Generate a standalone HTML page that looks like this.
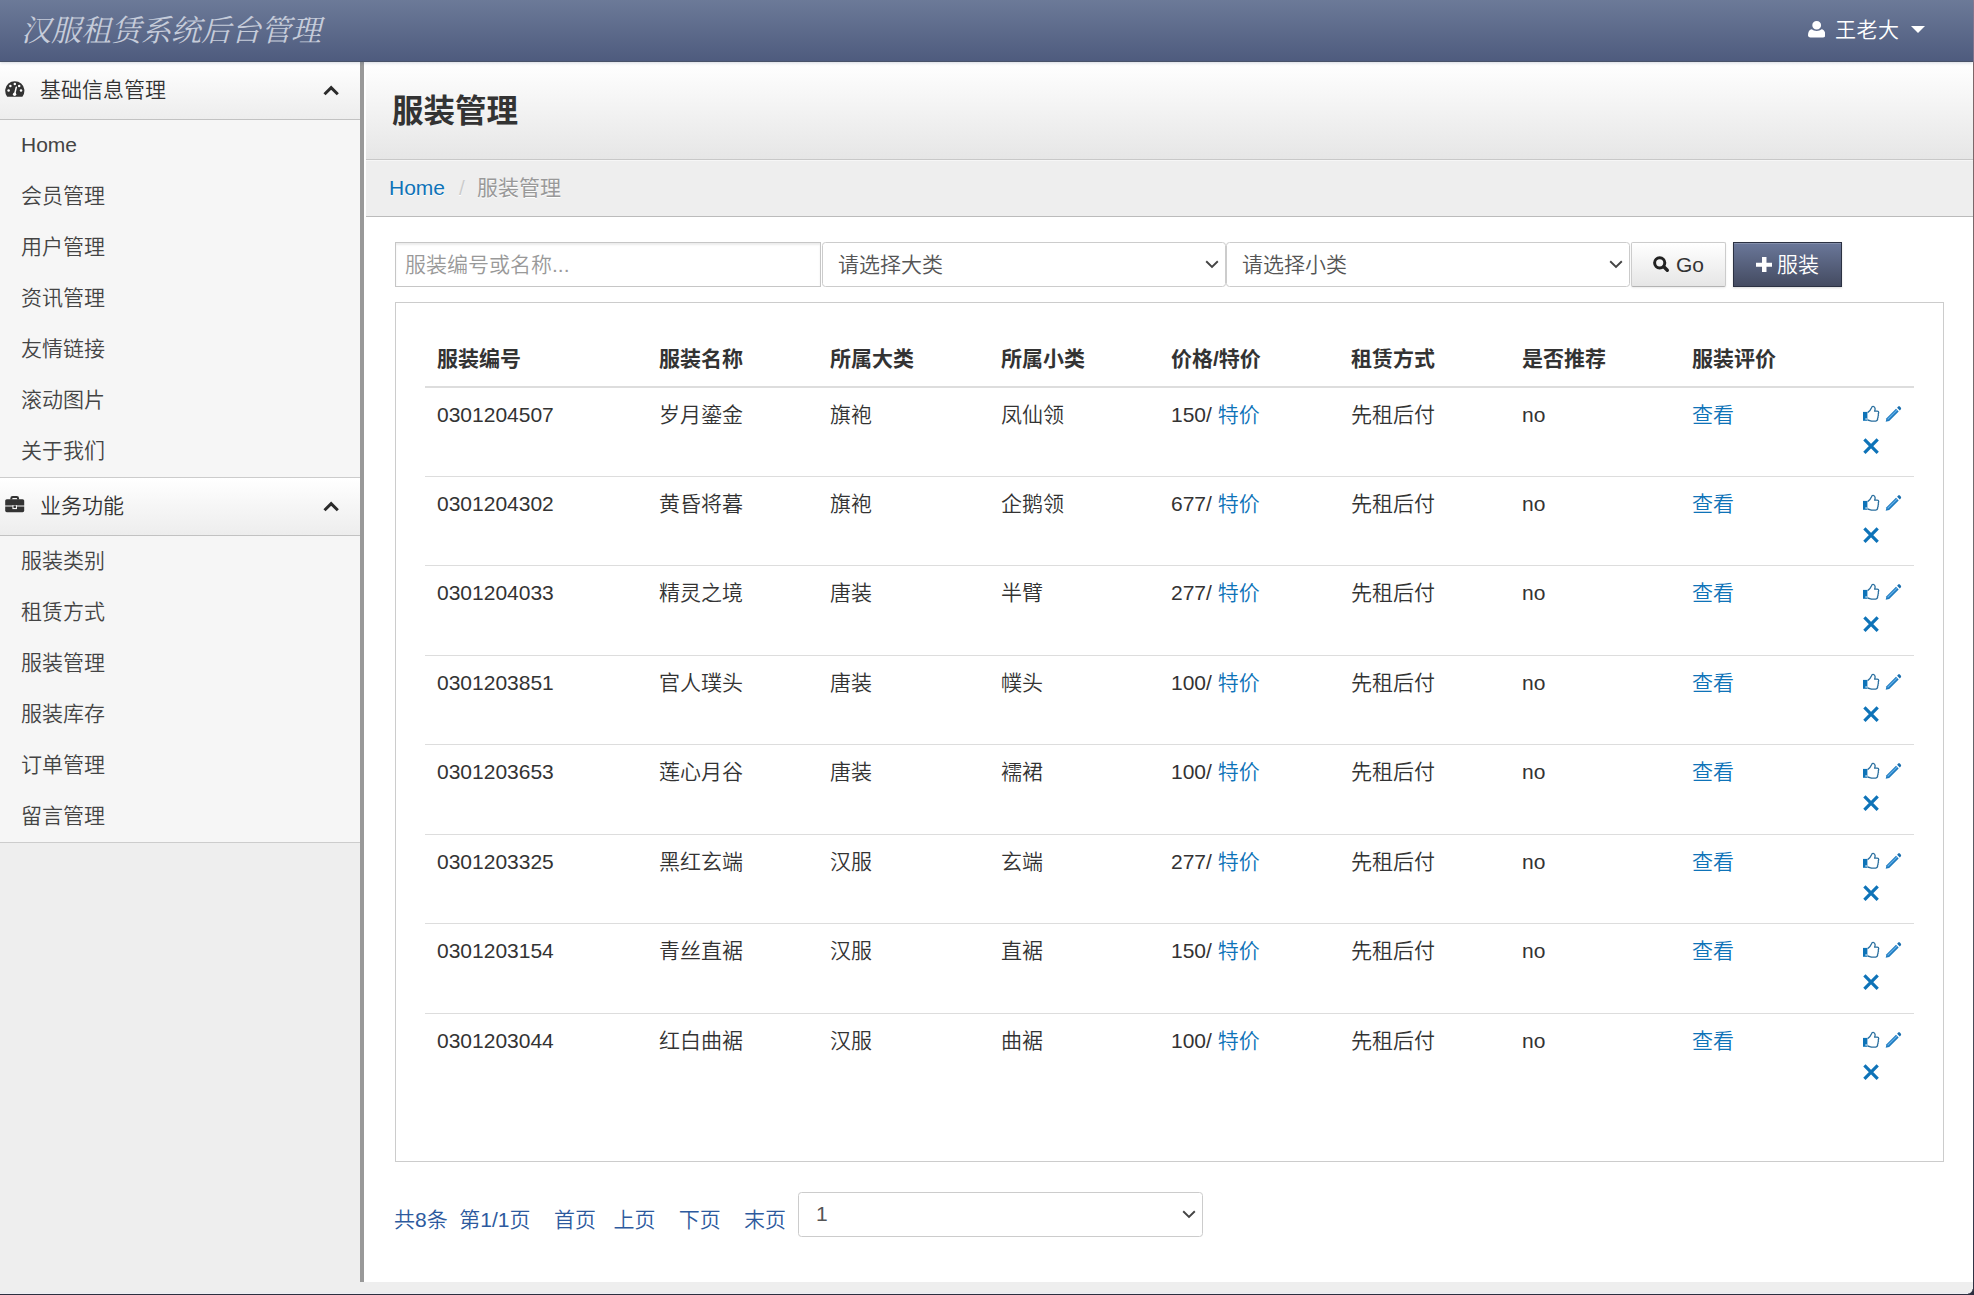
<!DOCTYPE html>
<html lang="zh-CN">
<head>
<meta charset="utf-8">
<title>汉服租赁系统后台管理</title>
<style>
*{box-sizing:border-box;margin:0;padding:0}
html,body{width:1974px;height:1295px;overflow:hidden;background:#fff}
body{position:relative;font-family:"Liberation Sans","Noto Sans CJK SC",sans-serif;font-size:21px;line-height:30px;color:#333;font-weight:350}
a{color:#0e73b8;text-decoration:none}
svg{display:block}

/* top bar */
#top{position:absolute;left:0;top:0;width:1973px;height:62px;background:linear-gradient(#6c7a98,#4e5b7e);border-bottom:1px solid #495369;box-shadow:0 1px 3px rgba(30,50,90,.18);z-index:5}
#brand{position:absolute;left:21px;top:9px;height:44px;line-height:44px;font-family:"Liberation Serif","Noto Serif CJK SC",serif;font-style:italic;font-weight:400;font-size:30px;color:#c6ccda;white-space:nowrap}
#user{position:absolute;left:1835px;top:15px;letter-spacing:.5px;line-height:30px;font-size:21px;color:#fff;white-space:nowrap}
#user-ico{position:absolute;left:1808px;top:21px}
#user-caret{position:absolute;left:1911px;top:26px;width:0;height:0;border-left:7px solid transparent;border-right:7px solid transparent;border-top:7px solid #fff}

/* sidebar */
#side{position:absolute;left:0;top:62px;width:360px;height:1220px;background:#eee}
#divider{position:absolute;left:360px;top:62px;width:4px;height:1220px;background:#999}
.sec{position:absolute;left:0;width:360px;height:58px;background:linear-gradient(#fff,#ededed);border-bottom:1px solid #c2c2c2}
.sec span{position:absolute;left:40px;top:13px;line-height:30px;font-size:21px;color:#333}
.sec .ico{position:absolute;left:5px;top:18px}
.sec .chev{position:absolute;left:322px;top:22px}
.menu{position:absolute;left:0;width:360px;background:#f6f6f6;border-bottom:1px solid #ccc;list-style:none}
.menu li{height:51px;line-height:49px;padding-left:21px;font-size:21px;color:#444}

/* content */
#main{position:absolute;left:364px;top:62px;width:1609px;height:1220px;background:#fff}
#phead{position:absolute;left:2px;top:0;width:1607px;height:98px;background:linear-gradient(#fff,#e6e6e6);border-bottom:1px solid #c8c8c8}
#phead h1{position:absolute;left:26px;top:27px;font-size:31.5px;line-height:45px;font-weight:bold;color:#333}
#crumb{position:absolute;left:2px;top:98px;width:1607px;height:57px;text-shadow:0 1px 0 #fff;box-shadow:inset 0 1px 0 #f6f6f6;background:#eee;border-bottom:1px solid #bbb;font-size:21px;line-height:30px}
#crumb a{position:absolute;left:23px;top:13px}
#crumb i{position:absolute;left:93px;top:13px;color:#ccc;font-style:normal}
#crumb b{position:absolute;left:111px;top:13px;color:#999;font-weight:normal}

/* search row */
.inp{position:absolute;top:180px;height:45px;border:1px solid #ccc;background:#fff;font-size:21px;line-height:43px;color:#555;white-space:nowrap}
#q{left:31px;width:426px;border-radius:0;border-color:#c6c6c6;padding-left:9px;color:#999;box-shadow:inset 0 2px 2px rgba(0,0,0,.075)}
.sel{border-radius:3.5px;padding-left:15px}
.sel svg{position:absolute;right:6px;top:16.700px}
#s1{left:458px;width:404px}
#s2{left:862px;width:404px}
#go{position:absolute;left:1267px;top:180px;width:95px;height:45px;border:1px solid #ccc;border-bottom-color:#b3b3b3;border-radius:2px;background:linear-gradient(#fff,#e6e6e6);box-shadow:0 1px 2px rgba(0,0,0,.08)}
#go svg{position:absolute;left:21px;top:13px}
#go span{position:absolute;left:44px;top:7px;line-height:30px;color:#333}
#add{position:absolute;left:1369px;top:180px;width:109px;height:45px;border:1px solid #2b3142;border-radius:0;background:linear-gradient(#6a7799,#444b61);box-shadow:inset 0 1px 0 rgba(255,255,255,.18),0 1px 2px rgba(0,0,0,.15)}
#add svg{position:absolute;left:21.500px;top:13.500px}
#add span{position:absolute;left:43px;top:7px;line-height:30px;color:#fff}

/* panel + table */
#panel{position:absolute;left:31px;top:240px;width:1549px;height:860px;border:1px solid #ccc;background:#fff}
table{position:absolute;left:29px;top:28px;width:1489px;border-collapse:collapse;table-layout:fixed}
th,td{text-align:left;vertical-align:top;padding:13px 12px 0 12px;font-size:21px;line-height:30px;white-space:nowrap}
th{height:56px;font-weight:bold;border-bottom:2px solid #ddd;color:#333}
td{height:89.5px;border-top:1px solid #ddd;padding-top:12px}
tr.first td{border-top:0;height:89px}
td.ops{padding-left:11px;padding-top:13px}
td.ops svg{display:inline-block;vertical-align:top}

/* pager */
#pager{position:absolute;left:30px;top:1143px;font-size:21px;line-height:30px;color:#2d5a9e;white-space:nowrap}
#pager a{color:#2d5a9e}
#psel{position:absolute;left:434px;top:1130px;width:405px;height:45px;border:1px solid #ccc;border-radius:3.5px;padding-left:17px;font-size:21px;line-height:41px;color:#555;background:#fff}
#psel svg{position:absolute;right:6px;top:16.700px}

/* window frame */
#strip{position:absolute;left:0;top:1282px;width:1973px;height:12px;background:linear-gradient(#eee 0,#eee 10px,#e9e9ee 11px,#f4f4fa 12px)}
#frameR{position:absolute;left:1973px;top:0;width:1px;height:1295px;background:linear-gradient(#8c7b92 0,#8a7890 60px,#7d6668 64px,#6d6a6e 50%,#3a3c4c 92%,#2d2f40 100%)}
#corner{position:absolute;left:1968px;top:1289px;width:5px;height:5px;background:radial-gradient(circle at 0 0,rgba(45,47,64,0) 4px,#2d2f40 5px)}
#frameB{position:absolute;left:0;top:1294px;width:1974px;height:1px;background:#2d2f40}
</style>
</head>
<body>
<svg width="0" height="0" style="position:absolute"><defs>
<g id="ic-up"><path d="M1 10.900h4.400v8.900H1z" fill="#0e73b8"/><circle cx="4.100" cy="18" r=".800" fill="#fff"/><path d="M5.600 11.600C7.500 10.600 8.700 8.800 9.400 7 9.800 5.700 10.400 5.300 11.200 5.400 12.400 5.600 13 6.500 13.100 7.600 13.200 8.600 12.900 9.400 12.600 10.200H15.200C16.200 10.200 16.700 10.800 16.700 11.600 16.700 12.300 16.500 12.700 16.200 13 16.600 13.700 16.500 14.600 16 15.100 16.300 15.900 16.100 16.700 15.600 17.200 15.800 18.700 15.100 19.900 13.700 20.100 12.200 20.300 10.600 20.200 9.200 20 8 19.800 7.200 19.200 5.600 19" fill="none" stroke="#2a6f9f" stroke-width="1.300" stroke-linejoin="round"/></g>
<g id="ic-pen"><path d="M5.700 20.800 6.500 17.300 16 7.800 18.700 10.500 9.200 20z" fill="#1f7bbf"/><path d="M7.600 18.400 16.900 9.100" stroke="#63b0ea" stroke-width="1.300"/><path d="M17.100 6.700 18 5.800C18.600 5.200 19.500 5.200 20.100 5.800L20.700 6.400C21.300 7 21.300 7.900 20.700 8.500L19.800 9.400z" fill="#1a6faf"/></g>
<g id="ic-x"><path d="M2.400 8.400 15.700 21.800M15.700 8.400 2.400 21.800" stroke="#0e73b8" stroke-width="3.200" fill="none"/></g>
</defs></svg>
<div id="top">
  <div id="brand">汉服租赁系统后台管理</div>
  <svg id="user-ico" width="17.400" height="16.500" viewBox="0 0 17 18" preserveAspectRatio="none"><path fill="#fff" d="M8.5 0C11 0 12.8 2 12.8 4.6S11 9.4 8.5 9.4 4.2 7.2 4.2 4.6 6 0 8.5 0zM0 15.6c0-3.8 1.3-6.2 3.8-6.6 1.2 1.1 2.8 1.8 4.7 1.8s3.500-.7 4.700-1.800c2.500.4 3.800 2.800 3.800 6.600 0 1.400-1 2.400-2.400 2.400H2.400C1 18 0 17 0 15.600z"/></svg>
  <div id="user">王老大</div>
  <div id="user-caret"></div>
</div>

<div id="side">
  <div class="sec" style="top:0"><svg class="ico" width="20" height="17" viewBox="0 0 20 17"><path d="M1.900 16.200A9.600 9.600 0 1 1 17.700 16.200Q17.400 16.700 16.800 16.700H2.800Q2.200 16.700 1.900 16.200Z" fill="#333"/><g fill="#fff"><circle cx="3.600" cy="10.600" r="1.250"/><circle cx="5.400" cy="6" r="1.250"/><circle cx="9.800" cy="4" r="1.250"/><circle cx="14.200" cy="6" r="1.250"/><circle cx="16" cy="10.600" r="1.250"/><circle cx="9.600" cy="14.200" r="1.700"/></g><path d="M9.700 14 11.300 7.200" stroke="#fff" stroke-width="1.500" stroke-linecap="round"/></svg><span>基础信息管理</span><svg class="chev" width="18" height="12" viewBox="0 0 18 12"><path d="M2.500 10.200 9.150 3.700 15.800 10.200" fill="none" stroke="#2b2b2b" stroke-width="3"/></svg></div>
  <ul class="menu" style="top:58px;height:358px">
    <li>Home</li><li>会员管理</li><li>用户管理</li><li>资讯管理</li><li>友情链接</li><li>滚动图片</li><li>关于我们</li>
  </ul>
  <div class="sec" style="top:416px"><svg class="ico" width="20" height="17" viewBox="0 0 20 17"><path d="M6.300 3.500V2.400Q6.300 1 7.700 1H11.700Q13.100 1 13.100 2.400V3.500" fill="none" stroke="#333" stroke-width="2"/><path d="M1.800 3.200H17.600Q19.200 3.200 19.200 4.800V9.500H.200V4.800Q.200 3.200 1.800 3.200Z" fill="#333"/><path d="M.200 10.600H19.200V14.600Q19.200 16.200 17.600 16.200H1.800Q.200 16.200 .200 14.600Z" fill="#333"/><rect x="7.400" y="9.200" width="4.600" height="3.900" fill="#f4f4f4"/><rect x="8.500" y="9.500" width="2.400" height="2.500" fill="#333"/></svg><span>业务功能</span><svg class="chev" width="18" height="12" viewBox="0 0 18 12"><path d="M2.500 10.200 9.150 3.700 15.800 10.200" fill="none" stroke="#2b2b2b" stroke-width="3"/></svg></div>
  <ul class="menu" style="top:474px;height:307px">
    <li>服装类别</li><li>租赁方式</li><li>服装管理</li><li>服装库存</li><li>订单管理</li><li>留言管理</li>
  </ul>
</div>
<div id="divider"></div>

<div id="main">
  <div id="phead"><h1>服装管理</h1></div>
  <div id="crumb"><a>Home</a><i>/</i><b>服装管理</b></div>

  <div class="inp" id="q">服装编号或名称...</div>
  <div class="inp sel" id="s1">请选择大类<svg width="14" height="9" viewBox="0 0 14 9"><path d="M1.200 1.300 7 7 12.800 1.300" fill="none" stroke="#444" stroke-width="1.900"/></svg></div>
  <div class="inp sel" id="s2">请选择小类<svg width="14" height="9" viewBox="0 0 14 9"><path d="M1.200 1.300 7 7 12.800 1.300" fill="none" stroke="#444" stroke-width="1.900"/></svg></div>
  <div id="go"><svg width="17" height="17" viewBox="0 0 17 17"><circle cx="6.700" cy="6.800" r="5.100" fill="none" stroke="#222" stroke-width="3"/><path d="M10.800 10.800 14.300 14.300" stroke="#222" stroke-width="3.400" stroke-linecap="round"/></svg><span>Go</span></div>
  <div id="add"><svg width="16.500" height="15.500" viewBox="0 0 17 17" preserveAspectRatio="none"><path d="M6.200 0h4.600v6.300H17v4.400h-6.200V17H6.200v-6.300H0V6.300h6.200z" fill="#fff"/></svg><span>服装</span></div>
  <div id="panel">
   <table>
    <colgroup><col style="width:222px"><col style="width:171px"><col style="width:171px"><col style="width:170px"><col style="width:180px"><col style="width:171px"><col style="width:170px"><col style="width:171px"><col></colgroup>
    <thead><tr><th>服装编号</th><th>服装名称</th><th>所属大类</th><th>所属小类</th><th>价格/特价</th><th>租赁方式</th><th>是否推荐</th><th>服装评价</th><th></th></tr></thead>
    <tbody>
<tr class="first"><td>0301204507</td><td>岁月鎏金</td><td>旗袍</td><td>凤仙领</td><td>150/ <a>特价</a></td><td>先租后付</td><td>no</td><td><a>查看</a></td><td class="ops"><svg class="i-up" width="18" height="30" viewBox="0 0 18 30"><use href="#ic-up"/></svg><svg class="i-pen" width="22" height="30" viewBox="0 0 22 30"><use href="#ic-pen"/></svg><br><svg class="i-x" width="18" height="30" viewBox="0 0 18 30"><use href="#ic-x"/></svg></td></tr>
<tr><td>0301204302</td><td>黄昏将暮</td><td>旗袍</td><td>企鹅领</td><td>677/ <a>特价</a></td><td>先租后付</td><td>no</td><td><a>查看</a></td><td class="ops"><svg class="i-up" width="18" height="30" viewBox="0 0 18 30"><use href="#ic-up"/></svg><svg class="i-pen" width="22" height="30" viewBox="0 0 22 30"><use href="#ic-pen"/></svg><br><svg class="i-x" width="18" height="30" viewBox="0 0 18 30"><use href="#ic-x"/></svg></td></tr>
<tr><td>0301204033</td><td>精灵之境</td><td>唐装</td><td>半臂</td><td>277/ <a>特价</a></td><td>先租后付</td><td>no</td><td><a>查看</a></td><td class="ops"><svg class="i-up" width="18" height="30" viewBox="0 0 18 30"><use href="#ic-up"/></svg><svg class="i-pen" width="22" height="30" viewBox="0 0 22 30"><use href="#ic-pen"/></svg><br><svg class="i-x" width="18" height="30" viewBox="0 0 18 30"><use href="#ic-x"/></svg></td></tr>
<tr><td>0301203851</td><td>官人璞头</td><td>唐装</td><td>幞头</td><td>100/ <a>特价</a></td><td>先租后付</td><td>no</td><td><a>查看</a></td><td class="ops"><svg class="i-up" width="18" height="30" viewBox="0 0 18 30"><use href="#ic-up"/></svg><svg class="i-pen" width="22" height="30" viewBox="0 0 22 30"><use href="#ic-pen"/></svg><br><svg class="i-x" width="18" height="30" viewBox="0 0 18 30"><use href="#ic-x"/></svg></td></tr>
<tr><td>0301203653</td><td>莲心月谷</td><td>唐装</td><td>襦裙</td><td>100/ <a>特价</a></td><td>先租后付</td><td>no</td><td><a>查看</a></td><td class="ops"><svg class="i-up" width="18" height="30" viewBox="0 0 18 30"><use href="#ic-up"/></svg><svg class="i-pen" width="22" height="30" viewBox="0 0 22 30"><use href="#ic-pen"/></svg><br><svg class="i-x" width="18" height="30" viewBox="0 0 18 30"><use href="#ic-x"/></svg></td></tr>
<tr><td>0301203325</td><td>黑红玄端</td><td>汉服</td><td>玄端</td><td>277/ <a>特价</a></td><td>先租后付</td><td>no</td><td><a>查看</a></td><td class="ops"><svg class="i-up" width="18" height="30" viewBox="0 0 18 30"><use href="#ic-up"/></svg><svg class="i-pen" width="22" height="30" viewBox="0 0 22 30"><use href="#ic-pen"/></svg><br><svg class="i-x" width="18" height="30" viewBox="0 0 18 30"><use href="#ic-x"/></svg></td></tr>
<tr><td>0301203154</td><td>青丝直裾</td><td>汉服</td><td>直裾</td><td>150/ <a>特价</a></td><td>先租后付</td><td>no</td><td><a>查看</a></td><td class="ops"><svg class="i-up" width="18" height="30" viewBox="0 0 18 30"><use href="#ic-up"/></svg><svg class="i-pen" width="22" height="30" viewBox="0 0 22 30"><use href="#ic-pen"/></svg><br><svg class="i-x" width="18" height="30" viewBox="0 0 18 30"><use href="#ic-x"/></svg></td></tr>
<tr><td>0301203044</td><td>红白曲裾</td><td>汉服</td><td>曲裾</td><td>100/ <a>特价</a></td><td>先租后付</td><td>no</td><td><a>查看</a></td><td class="ops"><svg class="i-up" width="18" height="30" viewBox="0 0 18 30"><use href="#ic-up"/></svg><svg class="i-pen" width="22" height="30" viewBox="0 0 22 30"><use href="#ic-pen"/></svg><br><svg class="i-x" width="18" height="30" viewBox="0 0 18 30"><use href="#ic-x"/></svg></td></tr>
    </tbody>
   </table>
  </div>
  <div id="pager"><a>共8条</a>&nbsp; <a>第1/1页</a>&nbsp; &nbsp; <a>首页</a>&nbsp; &nbsp;<a>上页</a>&nbsp; &nbsp; <a>下页</a>&nbsp; &nbsp; <a>末页</a></div>
  <div id="psel">1<svg width="14" height="9" viewBox="0 0 14 9"><path d="M1.200 1.300 7 7 12.800 1.300" fill="none" stroke="#444" stroke-width="1.900"/></svg></div>
</div>
<div id="strip"></div><div id="frameR"></div><div id="frameB"></div><div id="corner"></div>
</body>
</html>
